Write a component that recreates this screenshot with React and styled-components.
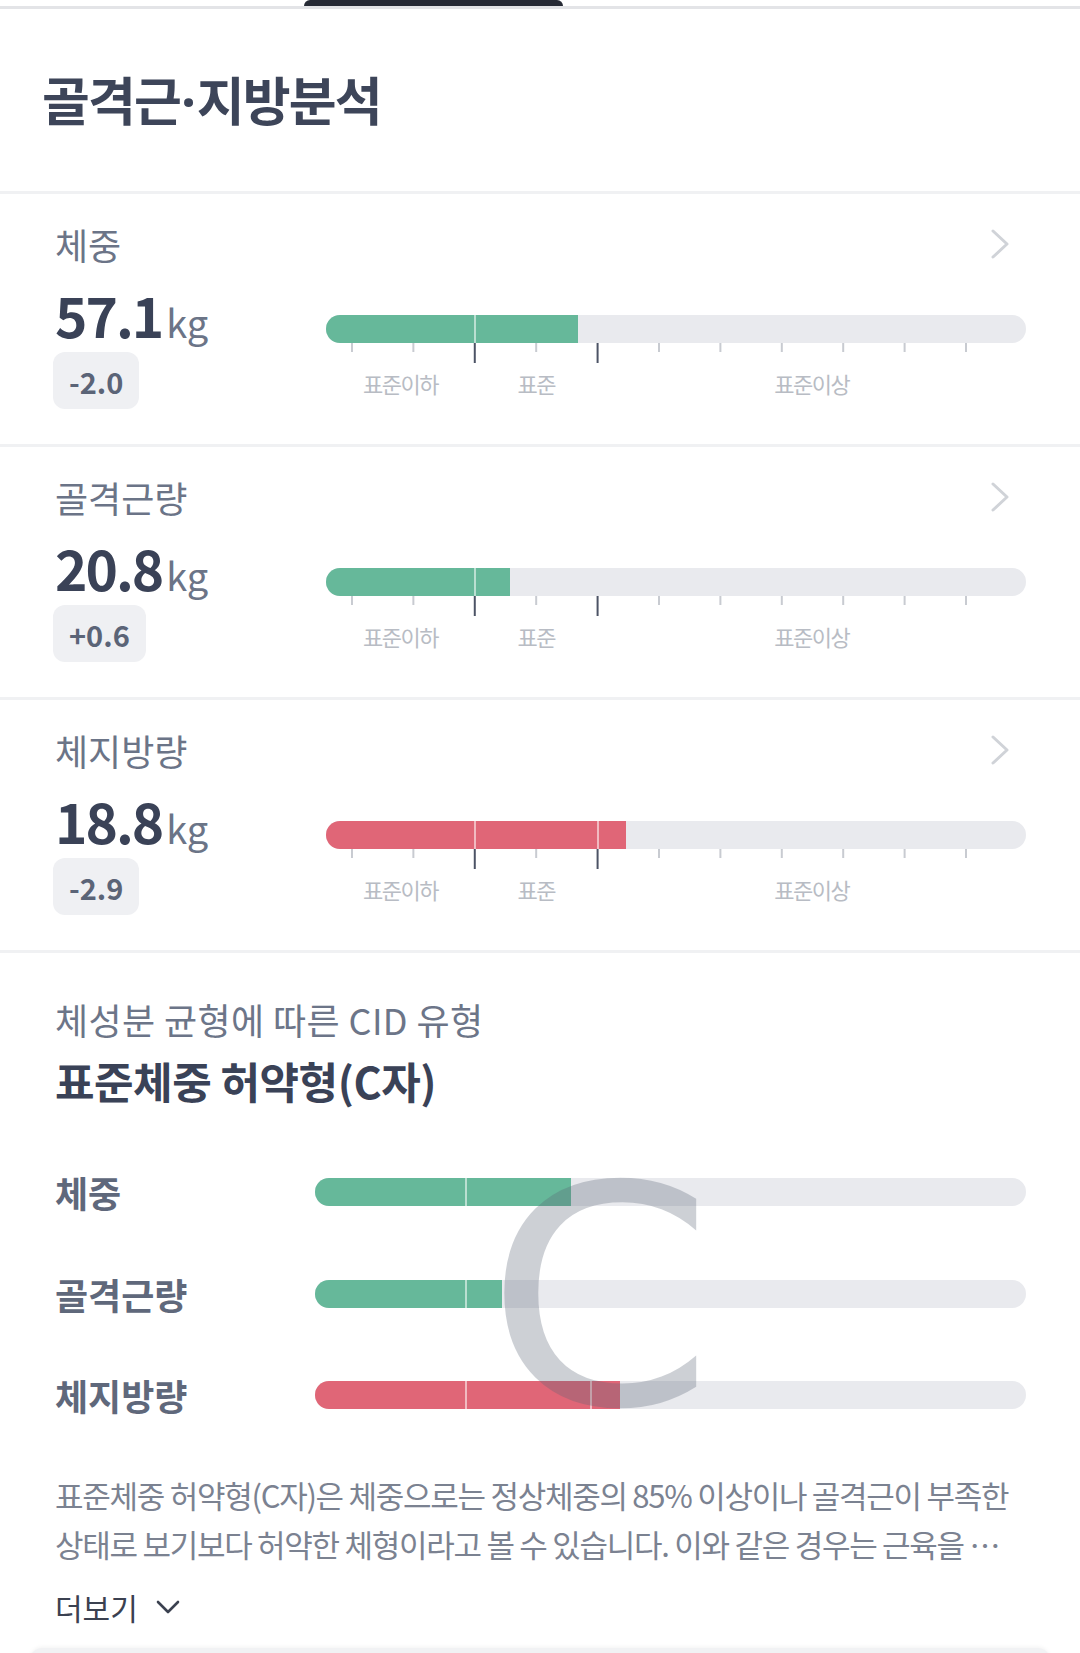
import styled, { createGlobalStyle } from 'styled-components'

const GlobalStyle = createGlobalStyle`
  body {
    margin: 0;
    background: #fff;
    font-family: 'Noto Sans CJK KR', 'Noto Sans', sans-serif;
  }
`

const TICKS = Array.from({ length: 11 }, (_, k) => 3.71 + 8.772 * k)
const MAJOR = [2, 4]
const BOUNDS = [21.26, 38.8]

const toneColor = { green: '#66b89a', red: '#e06677' }

const metrics = [
  { name: '체중', value: '57.1', delta: '-2.0', pct: 36, tone: 'green' },
  { name: '골격근량', value: '20.8', delta: '+0.6', pct: 26.3, tone: 'green' },
  { name: '체지방량', value: '18.8', delta: '-2.9', pct: 42.9, tone: 'red' },
]

const Page = styled.div`
  width: 1080px;
  height: 1653px;
  background: #fff;
  overflow: hidden;
`

const TopBar = styled.div`
  height: 9px;
  box-shadow: inset 0 -3px 0 #e3e4e7;
`

const Tab = styled.div`
  margin-left: 304px;
  width: 259px;
  height: 6px;
  background: #262a35;
  border-radius: 6px 6px 0 0;
`

const Header = styled.header`
  height: 182px;
  display: flex;
  align-items: center;
  padding-left: 42px;
`

const Title = styled.h1`
  margin: 0;
  font-size: 52px;
  line-height: 64px;
  font-weight: 700;
  letter-spacing: -1.8px;
  color: #3d4559;
`

const Dot = styled.span`
  font-family: 'Noto Sans', sans-serif;
  letter-spacing: 0;
  margin: 0 1px;
`

const MetricSection = styled.section`
  display: grid;
  grid-template-columns: 271px 1fr;
  padding: 28px 54px 35px 55px;
  border-top: 3px solid #f0f1f3;
`

const LeftCol = styled.div`
  display: flex;
  flex-direction: column;
  align-items: flex-start;
`

const Label = styled.div`
  font-size: 36px;
  line-height: 44px;
  color: #6b7487;
`

const ValueRow = styled.div`
  display: flex;
  align-items: baseline;
  gap: 4px;
  height: 70px;
  margin-top: 13px;
  line-height: 70px;
`

const Value = styled.span`
  font-size: 55px;
  font-weight: 700;
  letter-spacing: -2px;
  color: #3a4257;
`

const Unit = styled.span`
  font-size: 38px;
  color: #6b7487;
`

const Badge = styled.span`
  display: inline-flex;
  align-items: center;
  height: 57px;
  margin: 3px 0 0 -2px;
  padding: 0 16px;
  border-radius: 12px;
  background: #eff0f3;
  color: #5b6477;
  font-size: 29px;
  font-weight: 700;
`

const RightCol = styled.div`
  display: flex;
  flex-direction: column;
`

const HeadRow = styled.div`
  height: 44px;
  display: flex;
  align-items: center;
  justify-content: flex-end;
  padding-right: 16px;
`

const BarBlock = styled.div`
  margin-top: 49px;
`

const Track = styled.div`
  position: relative;
  height: 28px;
  border-radius: 14px;
  background: #e9eaee;
  overflow: hidden;
`

const Fill = styled.div`
  height: 100%;
  background: ${({ $tone }) => toneColor[$tone]};
`

const Split = styled.span`
  position: absolute;
  top: 0;
  bottom: 0;
  width: 2px;
  margin-left: -1px;
  background: rgba(255, 255, 255, 0.55);
`

const Axis = styled.svg`
  display: block;
  width: 100%;
  height: 20px;
`

const ScaleLabels = styled.div`
  display: grid;
  grid-template-columns: 21.26% 17.54% 1fr;
  margin-top: 6px;
  font-size: 22px;
  line-height: 28px;
  letter-spacing: -1.5px;
  color: #b8bcc4;
  text-align: center;
`

const TypeSection = styled.section`
  border-top: 3px solid #f0f1f3;
  padding: 43px 54px 0 55px;
`

const Caption = styled.div`
  font-size: 36px;
  line-height: 46px;
  letter-spacing: 0.4px;
  color: #6c7588;
`

const TypeName = styled.h2`
  margin: 10px 0 0;
  font-size: 43px;
  line-height: 56px;
  font-weight: 700;
  color: #3a4257;
  letter-spacing: -0.5px;
`

const CompareGrid = styled.div`
  position: relative;
  margin-top: 33px;
  display: grid;
  grid-template-columns: 260px 1fr;
  grid-auto-rows: 101.7px;
  align-items: center;
`

const CompareLabel = styled.div`
  font-size: 36px;
  font-weight: 700;
  color: #5f687b;
`

const Watermark = styled.span`
  position: absolute;
  left: 431px;
  top: 5px;
  font-family: 'DejaVu Sans', sans-serif;
  font-size: 305px;
  line-height: 1;
  color: rgba(90, 98, 117, 0.3);
  transform: scaleX(1.07);
  transform-origin: left center;
  pointer-events: none;
`

const Description = styled.p`
  margin: 24px 0 0;
  max-width: 962px;
  font-size: 31px;
  line-height: 49px;
  letter-spacing: -1.27px;
  color: #7b8291;
  display: -webkit-box;
  -webkit-line-clamp: 2;
  -webkit-box-orient: vertical;
  overflow: hidden;
`

const More = styled.button`
  margin-top: 19px;
  padding: 0;
  border: 0;
  background: none;
  display: flex;
  align-items: center;
  gap: 18px;
  font-family: inherit;
  font-size: 30px;
  line-height: 40px;
  color: #3b4150;
`

const BottomCard = styled.div`
  margin: 21px 0 0 -25px;
  width: 1020px;
  height: 12px;
  border-radius: 14px 14px 0 0;
  background: #f1f2f4;
  box-shadow: 0 -1px 4px rgba(0, 0, 0, 0.05);
`

function Chevron() {
  return (
    <svg width="20" height="32" viewBox="0 0 20 32">
      <polyline points="3,3 17,16 3,29" fill="none" stroke="#d0d3d8" strokeWidth="3" strokeLinecap="round" strokeLinejoin="round" />
    </svg>
  )
}

function Bar({ pct, tone }) {
  return (
    <Track>
      <Fill $tone={tone} style={{ width: `${pct}%` }} />
      {BOUNDS.filter((b) => b < pct).map((b) => (
        <Split key={b} style={{ left: `${b}%` }} />
      ))}
    </Track>
  )
}

function Gauge({ pct, tone }) {
  return (
    <BarBlock>
      <Bar pct={pct} tone={tone} />
      <Axis>
        {TICKS.map((x, k) => {
          const major = MAJOR.includes(k)
          return (
            <line
              key={k}
              x1={`${x}%`}
              x2={`${x}%`}
              y1="0"
              y2={major ? 20 : 9}
              stroke={major ? '#4c5365' : '#c8cbd1'}
              strokeWidth="2"
            />
          )
        })}
      </Axis>
      <ScaleLabels>
        <span>표준이하</span>
        <span>표준</span>
        <span>표준이상</span>
      </ScaleLabels>
    </BarBlock>
  )
}

export default function App() {
  return (
    <Page>
      <GlobalStyle />
      <TopBar>
        <Tab />
      </TopBar>
      <Header>
        <Title>
          골격근<Dot>·</Dot>지방분석
        </Title>
      </Header>

      {metrics.map((m) => (
        <MetricSection key={m.name}>
          <LeftCol>
            <Label>{m.name}</Label>
            <ValueRow>
              <Value>{m.value}</Value>
              <Unit>kg</Unit>
            </ValueRow>
            <Badge>{m.delta}</Badge>
          </LeftCol>
          <RightCol>
            <HeadRow>
              <Chevron />
            </HeadRow>
            <Gauge pct={m.pct} tone={m.tone} />
          </RightCol>
        </MetricSection>
      ))}

      <TypeSection>
        <Caption>체성분 균형에 따른 CID 유형</Caption>
        <TypeName>표준체중 허약형(C자)</TypeName>
        <CompareGrid>
          {metrics.map((m) => [
            <CompareLabel key={`${m.name}-l`}>{m.name}</CompareLabel>,
            <Bar key={`${m.name}-b`} pct={m.pct} tone={m.tone} />,
          ])}
          <Watermark>C</Watermark>
        </CompareGrid>
        <Description>
          표준체중 허약형(C자)은 체중으로는 정상체중의 85% 이상이나 골격근이 부족한 상태로 보기보다 허약한 체형이라고 볼 수 있습니다. 이와 같은 경우는 근육을 늘리기 위한 근력 운동과 충분한 단백질 섭취가 필요합니다.
        </Description>
        <More>
          더보기
          <svg width="24" height="16" viewBox="0 0 24 16">
            <polyline points="2,3 12,13 22,3" fill="none" stroke="#3b4150" strokeWidth="2.6" strokeLinecap="round" strokeLinejoin="round" />
          </svg>
        </More>
        <BottomCard />
      </TypeSection>
    </Page>
  )
}
